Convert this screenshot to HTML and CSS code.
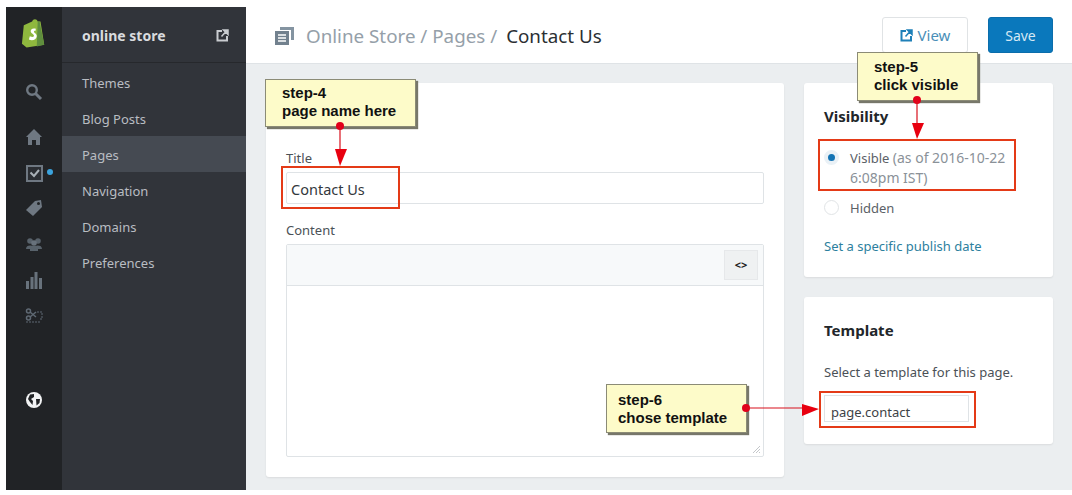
FILE: index.html
```html
<!DOCTYPE html>
<html lang="en">
<head>
  <meta charset="UTF-8">
  <meta name="viewport" content="width=device-width, initial-scale=1.0">
  <title>Contact Us</title>
  <link rel="stylesheet" href="styles.css">
</head>
<body>

  <div class="app">
    <aside class="rail">
      <svg class="logo" width="26" height="31" viewBox="0 0 28 32">
        <path d="M3 7 L12 3 C13 0 17 0 18 3 L21 3 L25 28 L6 31 L1 27 Z" fill="#8fb83e"/>
        <path d="M20 3 L25 28 L17 30 L18 3 Z" fill="#5f8e3e"/>
        <path d="M16 11 C12 10 10 12 10.500 14 C11 16 14 16.500 14 18.500 C14 20 12 20 9.500 19 L8.500 22.500 C12 24 16.500 23 17 19 C17.300 16 14 15.500 14 14 C14 13 15 13 15.500 13.500 Z" fill="#fff"/>
      </svg>
      <svg class="rail-icon search" width="18" height="18" viewBox="0 0 18 18"><circle cx="7" cy="7" r="4.800" fill="none" stroke="#6f7882" stroke-width="2.400"/><path d="M10.500 10.500 L16 16" stroke="#6f7882" stroke-width="3"/></svg>
      <svg class="rail-icon home" width="18" height="18" viewBox="0 0 18 18"><path d="M9 1 L17 9 L15 9 L15 17 L11 17 L11 12 L7 12 L7 17 L3 17 L3 9 L1 9 Z" fill="#6f7882"/></svg>
      <div class="orders">
        <svg class="rail-icon" width="17" height="17" viewBox="0 0 17 17"><rect x="1" y="1" width="15" height="15" fill="#2b2e33" stroke="#6f7882" stroke-width="2"/><path d="M4.500 7.500 L8 11 L13 5" fill="none" stroke="#a9b0b7" stroke-width="2"/></svg>
        <span class="dot"></span>
      </div>
      <svg class="rail-icon" width="18" height="18" viewBox="0 0 18 18"><path d="M10 2 L16 1 L17 8 L8 17 L1 11 Z" fill="#6f7882"/><circle cx="13.500" cy="4.500" r="1.500" fill="#212326"/></svg>
      <svg class="rail-icon customers" width="18" height="18" viewBox="0 0 18 18"><circle cx="5" cy="6" r="2.800" fill="#58626b"/><circle cx="13" cy="6" r="2.800" fill="#58626b"/><circle cx="9" cy="8" r="2.800" fill="#68727c"/><path d="M1 14 C1 10 5 10 9 11 C13 10 17 10 17 14 L13 14 L13 16 L5 16 L5 14 Z" fill="#58626b"/></svg>
      <svg class="rail-icon chart" width="18" height="20" viewBox="0 0 18 20"><path d="M1 11h3v8H1zM5.500 7h3v12h-3zM9.500 2h3v17h-3zM14 8h3v11h-3z" fill="#68727c"/></svg>
      <svg class="rail-icon" width="18" height="18" viewBox="0 0 18 18"><circle cx="3.500" cy="5" r="2" fill="none" stroke="#5f6973" stroke-width="1.500"/><circle cx="3.500" cy="12" r="2" fill="none" stroke="#5f6973" stroke-width="1.500"/><path d="M5 6 L11 11 M5 11 L11 6" stroke="#5f6973" stroke-width="1.500"/><path d="M12 6h5v7h-3M1 16h15" fill="none" stroke="#5f6973" stroke-dasharray="2 1"/></svg>
      <svg class="globe" width="16" height="16" viewBox="0 0 16 16"><circle cx="8" cy="8" r="8" fill="#f2f3f4"/><path d="M4 2.500 L8 2 L8 5 L5 7 L7 9 L6.500 13 L4 10 L2 7 Z M10 7 L14 7 L13.500 11 L10.500 13.500 Z" fill="#212326"/></svg>
    </aside>

    <nav class="sidenav">
      <div class="sidenav-head">
        <span>online store</span>
        <svg width="13" height="13" viewBox="0 0 13 13"><path d="M6 2H1.500V11.500H11V7" fill="none" stroke="#c9ccd0" stroke-width="2"/><path d="M7.500 1H12V5.500ZM10 2.500 L5.500 7.500" fill="#c9ccd0" stroke="#c9ccd0" stroke-width="1.500"/></svg>
      </div>
      <ul class="sidenav-list">
        <li>Themes</li>
        <li>Blog Posts</li>
        <li class="active">Pages</li>
        <li>Navigation</li>
        <li>Domains</li>
        <li>Preferences</li>
      </ul>
    </nav>

    <div class="main">
      <header class="topbar">
        <div class="crumbs">
          <svg width="20" height="19" viewBox="0 0 20 19"><path d="M5 1H19V14H16V4H5Z" fill="#8494a1"/><rect x="0" y="5" width="14" height="14" fill="#72818e"/><path d="M3 9h8M3 12h8M3 15h8" stroke="#fff" stroke-width="1.400"/></svg>
          <span class="crumb-links">Online Store / Pages /</span>
          <span class="crumb-current">Contact Us</span>
        </div>
        <div class="actions">
          <button class="btn-view" type="button">
            <svg width="13" height="13" viewBox="0 0 13 13"><path d="M6 2H1.500V11.500H11V7" fill="none" stroke="#1f80b8" stroke-width="2"/><path d="M7.500 1H12V5.500ZM10 2.500 L5.500 7.500" fill="#1f80b8" stroke="#1f80b8" stroke-width="1.500"/></svg>
            View
          </button>
          <button class="btn-save" type="button">Save</button>
        </div>
      </header>

      <div class="content">
        <section class="card card-page">
          <label class="field-label title-label">Title</label>
          <div class="text-input">Contact Us</div>
          <label class="field-label content-label">Content</label>
          <div class="editor">
            <div class="editor-bar"><span class="code-btn">&lt;&gt;</span></div>
            <div class="editor-body">
              <svg class="grip" width="9" height="9" viewBox="0 0 9 9"><path d="M1 8 L8 1 M4 8 L8 4 M7 8 L8 7" stroke="#c4c7ca"/></svg>
            </div>
          </div>
        </section>

        <div class="side">
          <section class="card card-visibility">
            <h2>Visibility</h2>
            <div class="radio-row">
              <span class="radio checked"></span>
              <p>Visible <span class="muted">(as of 2016-10-22 6:08pm IST)</span></p>
            </div>
            <div class="radio-row hidden-row">
              <span class="radio"></span>
              <p>Hidden</p>
            </div>
            <a class="publish-link">Set a specific publish date</a>
          </section>

          <section class="card card-template">
            <h2>Template</h2>
            <p>Select a template for this page.</p>
            <div class="template-input">page.contact</div>
          </section>
        </div>
      </div>
    </div>
  </div>

  <!-- annotations drawn over the screenshot -->
  <div class="note note-4">step-4<br>page name here</div>
  <div class="note note-5">step-5<br>click visible</div>
  <div class="note note-6">step-6<br>chose template</div>

  <div class="mark mark-title"></div>
  <div class="mark mark-visible"></div>
  <div class="mark mark-template"></div>

  <svg class="arrows" width="1072" height="495" viewBox="0 0 1072 495">
    <circle cx="340" cy="126" r="4" fill="#e2001a"/>
    <path d="M340 126V152" stroke="#d8101c" stroke-width="1.200"/>
    <path d="M335 149H347L340 166Z" fill="#e8000f"/>
    <circle cx="917" cy="100" r="4" fill="#e2001a"/>
    <path d="M917 100V125" stroke="#d8101c" stroke-width="1.200"/>
    <path d="M912 123H924L917 139Z" fill="#e8000f"/>
    <circle cx="746" cy="408" r="4" fill="#e2001a"/>
    <path d="M746 408H805" stroke="#d8101c" stroke-width="1.200"/>
    <path d="M802 404V416L819 409Z" fill="#e8000f"/>
  </svg>

</body>
</html>
```

FILE: styles.css
```css
* {
  box-sizing: border-box;
}

html, body {
  margin: 0;
  height: 495px;
  overflow: hidden;
}

body {
  position: relative;
  background-color: #fff;
  font-family: "Noto Sans", "Open Sans", sans-serif;
  font-size: 13px;
  color: #3d4246;
}

.app {
  display: flex;
  height: 490px;
  padding-left: 6px;
}

/* icon rail */
.rail {
  width: 56px;
  margin-top: 7px;
  background-color: #212326;
  display: flex;
  flex-direction: column;
  align-items: center;
  padding-top: 11px;
}

.logo {
  margin-bottom: 34px;
}

.rail-icon {
  display: block;
  margin-bottom: 18px;
}

.search {
  margin-bottom: 27px;
}

.home {
  margin-bottom: 19px;
}

.orders {
  position: relative;
  height: 17px;
  margin-bottom: 17px;
}

.dot {
  position: absolute;
  left: 21px;
  top: 4px;
  width: 6px;
  height: 6px;
  border-radius: 50%;
  background-color: #3ba3dd;
}

.customers {
  margin-bottom: 17px;
}

.chart {
  margin-bottom: 16px;
}

.globe {
  margin-top: 50px;
}

/* section nav */
.sidenav {
  width: 184px;
  margin-top: 7px;
  background-color: #31343a;
  color: #b9bdc2;
}

.sidenav-head {
  height: 56px;
  padding: 2px 17px 0 20px;
  display: flex;
  align-items: center;
  justify-content: space-between;
  border-bottom: 1px solid #26282c;
  font-size: 14px;
  font-weight: 700;
  color: #d9dbde;
}

.sidenav-list {
  list-style: none;
  margin: 0;
  padding: 1px 0 0;
}

.sidenav-list li {
  height: 36px;
  line-height: 38px;
  padding-left: 20px;
}

.sidenav-list .active {
  background-color: #454a52;
}

/* main column */
.main {
  flex: 1;
  display: flex;
  flex-direction: column;
  background-color: #ebeef0;
}

.topbar {
  height: 64px;
  padding: 17px 19px 0 29px;
  display: flex;
  justify-content: space-between;
  background-color: #fff;
  border-bottom: 1px solid #dfe3e6;
}

.crumbs {
  display: flex;
  align-items: center;
  height: 37px;
  font-size: 18.800px;
}

.crumb-links {
  margin-left: 11px;
  color: #95a0a9;
}

.crumb-current {
  margin-left: 9px;
  color: #2b2f33;
}

.actions {
  display: flex;
  gap: 20px;
}

.btn-view,
.btn-save {
  height: 36px;
  border-radius: 3px;
  font-family: inherit;
  font-size: 14px;
  padding: 0;
}

.btn-view {
  width: 86px;
  background-color: #fff;
  border: 1px solid #e0e3e5;
  color: #4a8fb8;
  font-size: 15px;
}

.btn-view svg {
  vertical-align: -1px;
  margin-right: 1px;
}

.btn-save {
  width: 65px;
  background-color: #0a78bc;
  border: 1px solid #0a6dab;
  color: #d6e8f4;
}

.content {
  flex: 1;
  display: flex;
  gap: 20px;
  padding: 19px 19px 13px 20px;
}

.card {
  background-color: #fff;
  border-radius: 3px;
  box-shadow: 0 1px 2px rgba(0, 0, 0, 0.08);
}

.card-page {
  width: 518px;
  padding: 65px 20px 0;
}

.field-label {
  display: block;
  height: 24px;
  line-height: 20px;
  color: #4b5157;
}

.text-input {
  height: 32px;
  line-height: 33px;
  padding-left: 4px;
  border: 1px solid #dfe3e6;
  border-radius: 2px;
  font-size: 14.500px;
  color: #33383c;
}

.content-label {
  margin-top: 16px;
}

.editor {
  height: 213px;
  border: 1px solid #dfe3e6;
  border-radius: 2px;
  display: flex;
  flex-direction: column;
}

.editor-bar {
  height: 41px;
  padding: 5px 5px 0 0;
  display: flex;
  justify-content: flex-end;
  background-color: #f7f9fa;
  border-bottom: 1px solid #dfe3e6;
}

.code-btn {
  width: 34px;
  height: 30px;
  line-height: 28px;
  text-align: center;
  background-color: #eff1f2;
  border: 1px solid #e6e8ea;
  font-size: 11px;
  font-weight: 700;
  color: #222;
}

.editor-body {
  flex: 1;
  display: flex;
  justify-content: flex-end;
  align-items: flex-end;
}

.grip {
  margin: 0 2px 2px 0;
}

.side {
  width: 249px;
  display: flex;
  flex-direction: column;
  gap: 20px;
}

.card h2 {
  margin: 0;
  font-size: 15px;
  line-height: 20px;
  font-weight: 700;
  color: #22262a;
}

.card-visibility {
  height: 194px;
  padding: 23px 20px 0;
}

.radio-row {
  display: flex;
  gap: 11px;
  margin-top: 22px;
}

.radio-row p {
  margin: 0;
  line-height: 20px;
  color: #5b6167;
}

.muted {
  font-size: 14px;
  color: #8a9198;
}

.hidden-row {
  margin-top: 10px;
}

.radio {
  flex: none;
  width: 15px;
  height: 15px;
  margin-top: 2px;
  border-radius: 50%;
  border: 1px solid #e1e4e6;
  background-color: #fff;
}

.radio.checked {
  border: 4px solid #eaf1f6;
  background-color: #1474b4;
}

.publish-link {
  display: block;
  margin-top: 19px;
  line-height: 18px;
  color: #2d7f9e;
}

.card-template {
  height: 147px;
  padding: 23px 20px 0;
}

.card-template p {
  margin: 22px 0 0;
  line-height: 20px;
  color: #4b5157;
}

.template-input {
  width: 145px;
  height: 27px;
  margin-top: 13px;
  padding-left: 6px;
  line-height: 32px;
  border: 1px solid #dfe3e6;
  color: #3d4246;
}

/* annotations */
.note {
  position: absolute;
  padding: 6px 0 0 16px;
  background-color: #fdfbc9;
  border: 1px solid #8b8b76;
  box-shadow: 2px 2px 1px #77776a;
  font-family: "Liberation Sans", Arial, sans-serif;
  font-size: 15px;
  font-weight: 700;
  line-height: 17.500px;
  color: #111;
}

.note-4 {
  left: 265px;
  top: 79px;
  width: 151px;
  height: 48px;
  padding-top: 4px;
}

.note-5 {
  left: 857px;
  top: 52px;
  width: 121px;
  height: 49px;
  padding-top: 5px;
}

.note-6 {
  left: 606px;
  top: 384px;
  width: 141px;
  height: 49px;
  padding-left: 11px;
}

.mark {
  position: absolute;
  border: 2px solid #e43a17;
}

.mark-title {
  left: 281px;
  top: 166px;
  width: 119px;
  height: 43px;
}

.mark-visible {
  left: 818px;
  top: 139px;
  width: 198px;
  height: 52px;
}

.mark-template {
  left: 819px;
  top: 391px;
  width: 157px;
  height: 37px;
}

.arrows {
  position: absolute;
  left: 0;
  top: 0;
  pointer-events: none;
}
```
